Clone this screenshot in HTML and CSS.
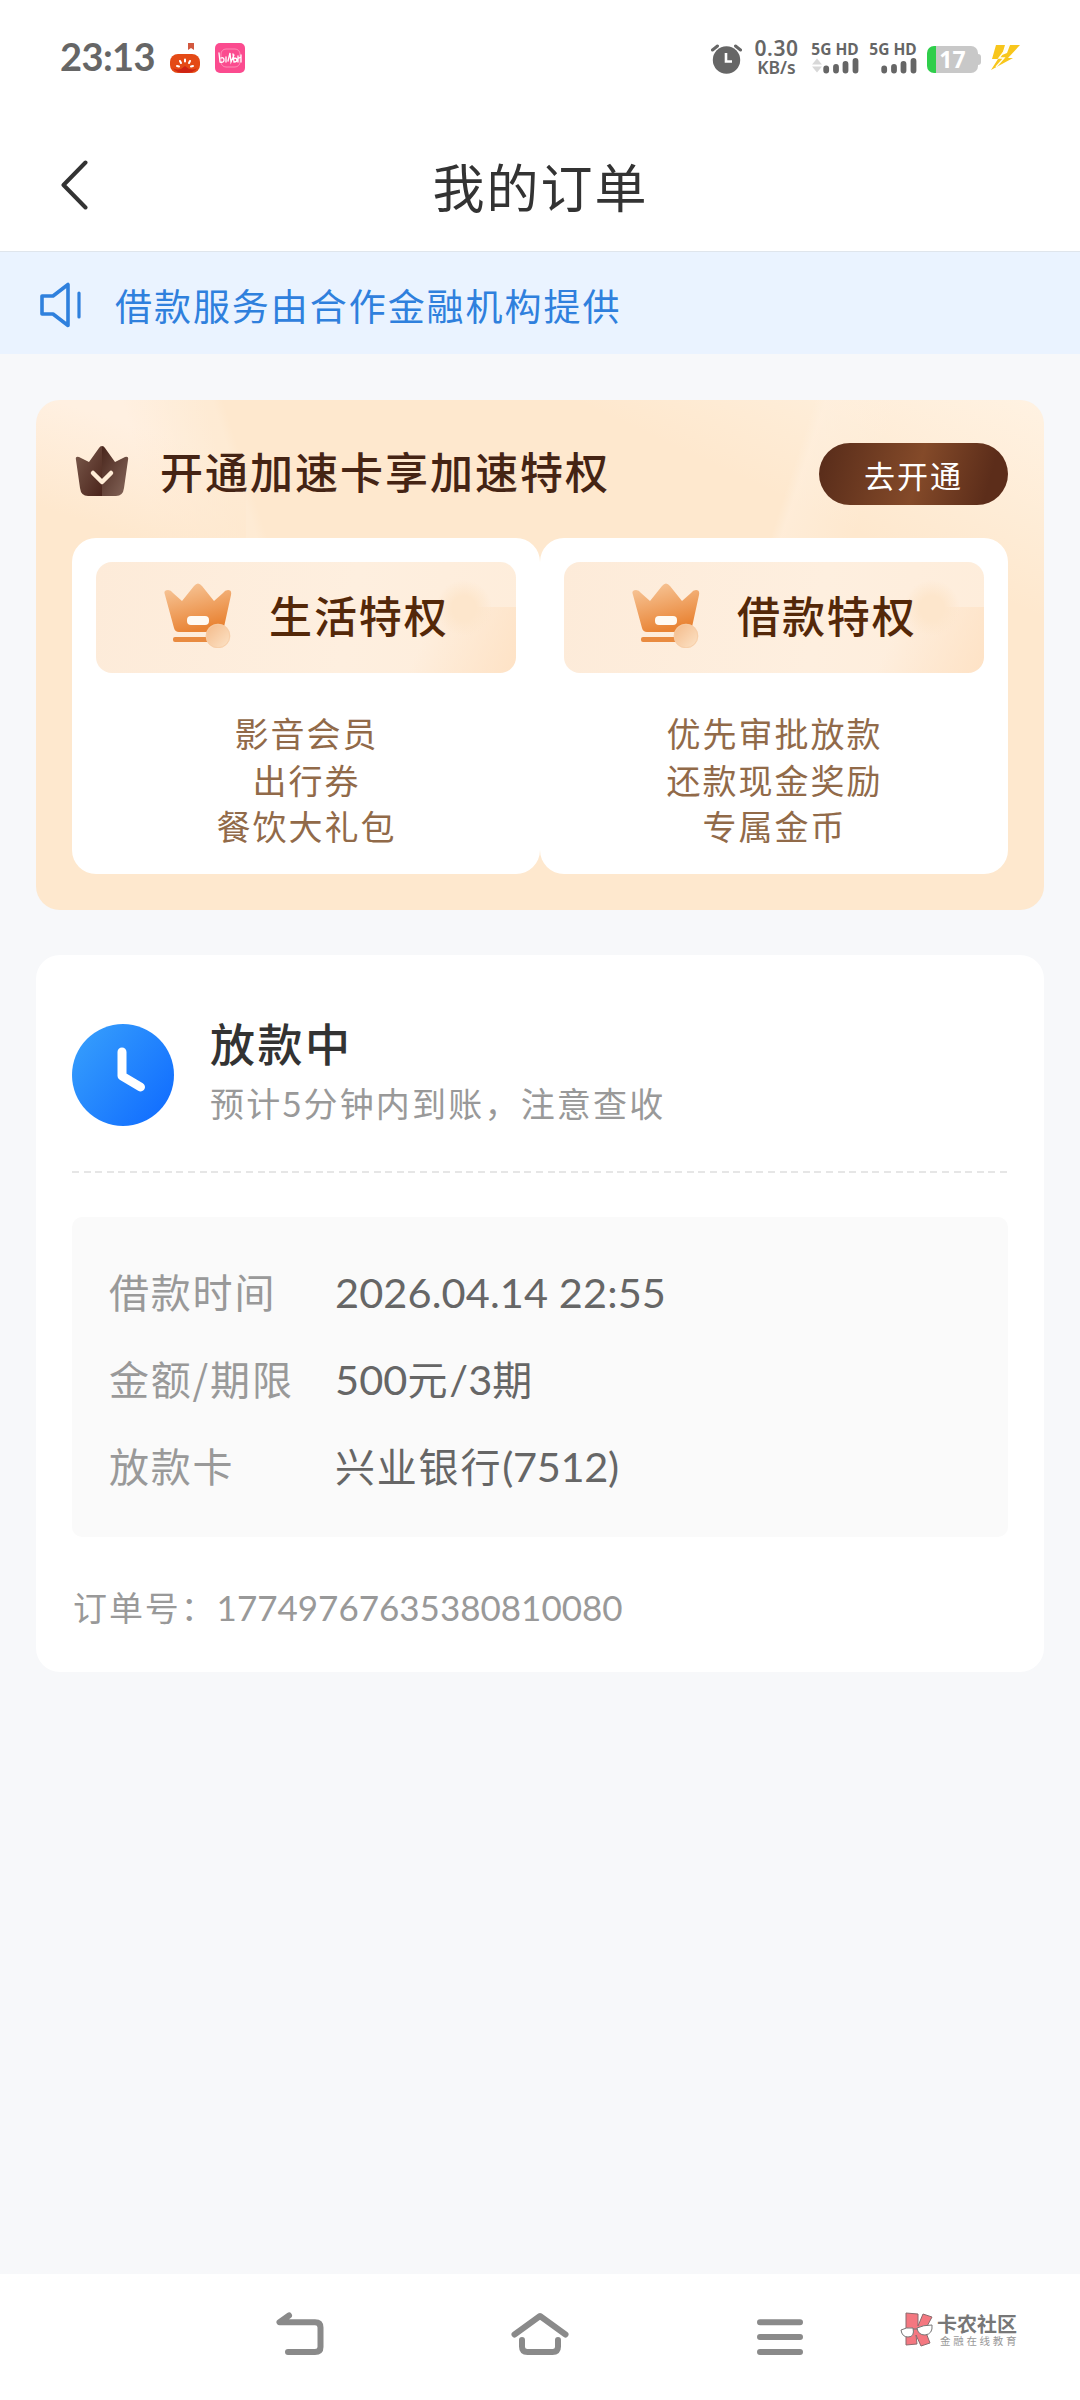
FILE: index.html
```html
<!DOCTYPE html>
<html lang="zh-CN">
<head>
<meta charset="utf-8">
<title>我的订单</title>
<link rel="stylesheet" href="styles.css">
</head>
<body>
<svg class="defs" width="0" height="0" aria-hidden="true">
  <defs>
    <linearGradient id="gold" x1="0" y1="0" x2=".35" y2="1"><stop offset="0" stop-color="#f8cba0"/><stop offset="1" stop-color="#e98435"/></linearGradient>
    <linearGradient id="coin" x1="0" y1="0" x2="1" y2="1"><stop offset="0" stop-color="#f3b988"/><stop offset="1" stop-color="#fde4c8"/></linearGradient>
    <symbol id="crown" viewBox="0 0 68 66">
      <path fill="url(#gold)" d="M1 13Q-1 8 4 8Q7 8 9 11L18 19L30 4Q34-1 38 4L50 19L59 11Q61 8 64 8Q68 8 67 13L60 45Q59 50 54 50H15Q11 50 10 46Z"/>
      <rect x="23" y="34" width="22" height="9" rx="4" fill="#fffaf3"/>
      <rect x="9" y="55" width="42" height="5" rx="2" fill="#e98b40"/>
      <circle cx="54" cy="54" r="12.3" fill="url(#coin)"/>
      <circle cx="54" cy="54" r="11.7" fill="none" stroke="#f6cba4" stroke-width=".8"/>
    </symbol>
  </defs>
</svg>

<div class="status">
  <span class="clock">23:13</span>
  <svg class="app-icon" viewBox="0 0 30 30">
    <path fill="#d2583f" d="M18 0h6v7l-3-2-3 2z"/>
    <rect y="11" width="30" height="19" rx="8" fill="#e44a16"/>
    <path d="M3 25q6 4 12-2q6 6 12 2q-3 5-12 5t-12-5" fill="#cf2413"/>
    <path d="M15 16.500v2M10 18l1 2M20 18l-1 2M7 23l2 .5M23 23l-2 .5" stroke="#fff" stroke-width="2" stroke-linecap="round"/>
  </svg>
  <svg class="app-icon second" viewBox="0 0 30 30">
    <rect width="30" height="30" rx="5" fill="#fb4b8f"/>
    <rect x="6" y="6" width="19" height="18" rx="5" fill="none" stroke="#fd8db6"/>
    <path d="M4 10l1 9q4 1 4-2t-3-2M11 14v5M13 18l2-8 1 9 3-7M18 11l1 8q3 0 3-2t-3-2M23 13v6M26 12v7M24 15l2-1" fill="none" stroke="#fff" stroke-width="1.300" stroke-linecap="round"/>
  </svg>
  <svg class="alarm" viewBox="0 0 31 30">
    <circle cx="15.500" cy="16" r="13.700" fill="#666"/>
    <path d="M1.500 6l5-4M29.500 6l-5-4" stroke="#666" stroke-width="3" stroke-linecap="round"/>
    <path d="M15 9v8.500h6" fill="none" stroke="#fff" stroke-width="2.600"/>
  </svg>
  <div class="speed"><span class="rate">0.30</span><span class="unit">KB/s</span></div>
  <div class="sim">
    <span>5G HD</span>
    <svg viewBox="0 0 48 17"><path fill="#d8d8d8" d="M1 7.500l5-6 5 6zM1 9.500l5 6 5-6z"/><path stroke="#666" stroke-width="5.800" stroke-linecap="round" d="M15.200 11.500v2M25 10v3.500M34.500 7v6.500M44.500 4v9.500"/></svg>
  </div>
  <div class="sim">
    <span>5G HD</span>
    <svg viewBox="0 0 48 17"><path stroke="#666" stroke-width="5.800" stroke-linecap="round" d="M15.200 11.500v2M25 10v3.500M34.500 7v6.500M44.500 4v9.500"/></svg>
  </div>
  <div class="battery"><span>17</span></div>
  <svg class="bolt" viewBox="0 0 30 26"><path fill="#f8c61c" d="M6 0h9l-3 10 5-2 3-8h10L18 13h5L1 25 8 14H2z"/><path d="M19 0L9 13h5L6 22" fill="none" stroke="#fffdf0" stroke-width="1.400"/></svg>
</div>

<header class="header">
  <svg class="back" viewBox="0 0 28 50"><path d="M25.500 2.500L3.500 25l22 22.500" fill="none" stroke="#333" stroke-width="4" stroke-linecap="round" stroke-linejoin="round"/></svg>
  <h1>我的订单</h1>
</header>

<div class="notice">
  <svg viewBox="0 0 42 46"><path d="M2 14h11L28 2.500v41L13 32H2z" fill="none" stroke="#2f80dd" stroke-width="3.600" stroke-linejoin="round"/><path d="M39 11v24" stroke="#2f80dd" stroke-width="3.200" stroke-linecap="round"/></svg>
  <span>借款服务由合作金融机构提供</span>
</div>

<main class="content">
  <section class="promo">
    <div class="promo-head">
      <svg viewBox="0 0 54 50">
        <defs>
          <linearGradient id="cl" x1="0" y1="0" x2="1" y2="1"><stop offset="0" stop-color="#7b5a4c"/><stop offset="1" stop-color="#4a241b"/></linearGradient>
          <linearGradient id="cr" x1="0" y1="0" x2="1" y2="1"><stop offset="0" stop-color="#49261c"/><stop offset="1" stop-color="#86675b"/></linearGradient>
        </defs>
        <path fill="url(#cl)" d="M27 0Q25 0 24 2L14 16L4 11Q0 10 1 14L5 42Q6 50 13 50H27Z"/>
        <path fill="url(#cr)" d="M27 0Q29 0 30 2L40 16L50 11Q54 10 53 14L49 42Q48 50 41 50H27Z"/>
        <path d="M18 27l9 9 9-9" fill="none" stroke="#ffedd7" stroke-width="4.500" stroke-linecap="round" stroke-linejoin="round"/>
      </svg>
      <h2>开通加速卡享加速特权</h2>
      <a class="open-btn">去开通</a>
    </div>
    <div class="perks">
      <div class="perk">
        <div class="perk-title"><svg><use href="#crown"/></svg><span>生活特权</span></div>
        <ul><li>影音会员</li><li>出行券</li><li>餐饮大礼包</li></ul>
      </div>
      <div class="perk">
        <div class="perk-title"><svg><use href="#crown"/></svg><span>借款特权</span></div>
        <ul><li>优先审批放款</li><li>还款现金奖励</li><li>专属金币</li></ul>
      </div>
    </div>
  </section>

  <section class="order">
    <div class="state">
      <svg viewBox="0 0 102 102">
        <defs><linearGradient id="blue" x1="0" y1=".1" x2="1" y2=".9"><stop offset="0" stop-color="#379ffc"/><stop offset="1" stop-color="#0f6bff"/></linearGradient></defs>
        <circle cx="51" cy="51" r="51" fill="url(#blue)"/>
        <path d="M50 28v24l18.500 11" fill="none" stroke="#fff" stroke-width="9" stroke-linecap="round" stroke-linejoin="round"/>
      </svg>
      <div class="state-text"><h3>放款中</h3><p>预计5分钟内到账，注意查收</p></div>
    </div>
    <div class="divider"></div>
    <dl class="info">
      <dt>借款时间</dt><dd><span class="num">2026.04.14 22:55</span></dd>
      <dt>金额/期限</dt><dd><span class="num">500</span>元<span class="num">/3</span>期</dd>
      <dt>放款卡</dt><dd>兴业银行<span class="num card">(7512)</span></dd>
    </dl>
    <p class="order-no">订单号：<span>17749767635380810080</span></p>
  </section>
</main>

<nav class="navbar">
  <svg class="nav-back" viewBox="0 0 48 44"><path d="M13 3.500L3.500 10.200H39Q44.500 10.200 44.500 15.500V35Q44.500 40 39 40H12" fill="none" stroke="#8a8a8a" stroke-width="6" stroke-linecap="round" stroke-linejoin="round"/></svg>
  <svg class="nav-home" viewBox="0 0 58 44"><path d="M3.500 22.500L29 4l25.500 18.500M11 28v6.500q0 5.500 5.500 5.500h25q5.500 0 5.500-5.500V28" fill="none" stroke="#8a8a8a" stroke-width="6" stroke-linecap="round" stroke-linejoin="round"/></svg>
  <svg class="nav-menu" viewBox="0 0 46 44"><path d="M3 10.200h40M3 25h40M3 40h40" stroke="#8a8a8a" stroke-width="6" stroke-linecap="round"/></svg>
  <div class="brand">
    <svg viewBox="0 0 34 36"><path d="M6 1l12 1v12l5-12 9 3-7 13 5 13-9 3-5-11 1 9-11 1z" fill="#f47780" stroke="#8b6b6e" stroke-width="1"/><path d="M1 18q5-3 12-2q2 9-5 9q-6 0-7-7zM17 16q6-3 15-3q1 9-7 10q-7 0-8-7zM13 17h4" fill="#fff" stroke="#777" stroke-width="1"/></svg>
    <div><b>卡农社区</b><small>金融在线教育</small></div>
  </div>
</nav>
</body>
</html>
```
FILE: styles.css
```css
* { box-sizing: border-box; margin: 0; padding: 0; }
body {
  width: 1080px;
  height: 2400px;
  display: flex;
  flex-direction: column;
  background: #f7f8fa;
  font-family: "Noto Sans CJK SC", sans-serif;
  color: #333;
  overflow: hidden;
}
svg { display: block; flex: none; }
.defs { position: absolute; }
ul { list-style: none; }

.status {
  height: 116px;
  padding: 0 60px;
  display: flex;
  align-items: center;
  background: #fff;
  color: #666;
}
.clock { width: 110px; padding-bottom: 4px; font: 700 38px/40px Lato, sans-serif; letter-spacing: -.6px; white-space: nowrap; }
.app-icon { width: 30px; height: 30px; }
.app-icon.second { margin-left: 15px; }
.alarm { width: 31px; height: 30px; margin: 2px 0 0 466px; }
.speed { width: 49px; margin: -2px 0 0 10px; display: flex; flex-direction: column; align-items: center; font-family: "Noto Sans", sans-serif; font-weight: 600; }
.rate { font-size: 21px; line-height: 19px; letter-spacing: .6px; }
.unit { font-size: 17.500px; line-height: 18px; }
.sim { width: 48px; margin: -2px 0 0 10px; }
.sim span { display: block; font: 700 15.500px/16px "Noto Sans", sans-serif; white-space: nowrap; text-align: center; }
.sim svg { width: 48px; height: 17px; }
.battery {
  position: relative;
  width: 51px;
  height: 27px;
  margin: 2px 0 0 10px;
  border-radius: 7px;
  background: linear-gradient(90deg, #2fce4b 9px, #c8c8c8 9px);
  color: #fff;
  font: 700 23px/27px "Noto Sans", sans-serif;
  text-align: center;
}
.battery::after { content: ""; position: absolute; left: 51px; top: 8px; width: 3px; height: 11px; border-radius: 0 3px 3px 0; background: #c8c8c8; }
.bolt { width: 30px; height: 26px; margin-left: 12px; }

.header {
  height: 136px;
  display: grid;
  grid-template-columns: 100px 1fr 100px;
  align-items: center;
  background: #fff;
  border-bottom: 1px solid #dfe5ec;
}
.back { width: 28px; height: 50px; margin: 3px 0 0 60px; }
.header h1 { font-size: 52px; line-height: 60px; font-weight: 400; letter-spacing: 2px; text-align: center; padding: 4px 0 0 1px; }

.notice {
  height: 102px;
  padding: 4px 0 0 40px;
  display: flex;
  align-items: center;
  gap: 33px;
  background: #eaf3ff;
  color: #2f80dd;
  font-size: 37px;
  letter-spacing: 1.950px;
}
.notice svg { width: 42px; height: 46px; }

.content { flex: 1; padding: 46px 36px 0; display: flex; flex-direction: column; gap: 45px; }

.promo {
  height: 510px;
  padding: 0 36px;
  border-radius: 24px;
  background:
    linear-gradient(18deg, #fee8ce 30%, #fee8ce00 75%) 0 0 / 210px 180px no-repeat,
    linear-gradient(75deg, #fff0e1 0 130px, #fff0e100 210px) 0 0 / 330px 180px no-repeat,
    linear-gradient(252deg, transparent 78%, #ffefdd66 79% 86%, transparent 88%) top / 100% 138px no-repeat,
    linear-gradient(108deg, transparent 74%, #fff0e088 75%, #fff0e000 82%) top / 100% 138px no-repeat,
    linear-gradient(205deg, #fff2e2, #fff2e200 200px),
    #fee8ce;
}
.promo-head { height: 138px; padding-top: 4px; display: flex; align-items: center; }
.promo-head svg { width: 54px; height: 50px; margin-left: 3px; }
.promo-head h2 { flex: 1; margin: -2px 0 0 31px; font-size: 43px; line-height: 60px; font-weight: 500; letter-spacing: 2px; color: #452414; }
.open-btn {
  width: 189px;
  height: 62px;
  margin-top: 6px;
  border-radius: 31px;
  background: linear-gradient(105deg, #5b2e1b 5%, #844a29 52%, #5c2d1a 88%);
  color: #fff;
  font-size: 31px;
  line-height: 63px;
  letter-spacing: 2px;
  text-align: center;
}
.perks { display: grid; grid-template-columns: 1fr 1fr; }
.perk { height: 336px; padding: 24px; border-radius: 24px; background: #fff; }
.perk-title {
  height: 111px;
  padding: 0 0 5px 68px;
  display: flex;
  align-items: center;
  border-radius: 16px;
  background:
    radial-gradient(circle at 368px 46px, #fde6cc 0 12px, #fde6cc00 28px),
    linear-gradient(115deg, #fee3c700 310px, #fee1c3 420px) 0 45px no-repeat,
    linear-gradient(100deg, #fdebd9, #feefdf 60%, #feeddb);
}
.perk-title svg { width: 68px; height: 66px; }
.perk-title span { margin-left: 37px; font-size: 43px; line-height: 60px; font-weight: 500; letter-spacing: 1.900px; color: #542809; padding-bottom: 2px; }
.perk ul { padding: 37px 0 0 1px; font-size: 34px; line-height: 46.700px; letter-spacing: 2px; text-align: center; color: #916a49; }

.order { height: 717px; padding: 0 36px; border-radius: 24px; background: #fff; }
.state { height: 216px; padding-top: 8px; display: flex; align-items: center; gap: 36px; }
.state > svg { width: 102px; height: 102px; margin-top: 16px; }
.state-text { padding-top: 9px; }
.state h3 { font-size: 45px; line-height: 62px; font-weight: 500; letter-spacing: 2.500px; }
.state p { font-size: 34px; line-height: 58px; letter-spacing: 2.200px; color: #999; }
.divider { height: 2px; background: repeating-linear-gradient(90deg, #e6e6e6 0 7px, transparent 7px 11.600px); }
.info {
  height: 320px;
  margin-top: 44px;
  padding: 31px 37px 0;
  display: grid;
  grid-template-columns: 226px 1fr;
  grid-auto-rows: 87px;
  line-height: 87px;
  border-radius: 10px;
  background: #fafafa;
  font-size: 40px;
  letter-spacing: 1.800px;
}
.info dt { color: #999; }
.info dd { color: #666; }
.num { font: 400 41.500px/60px Lato, sans-serif; letter-spacing: .1px; }
.num.card { letter-spacing: -.3px; }
.order-no { margin-top: 40px; padding-left: 1px; font-size: 34px; line-height: 60px; letter-spacing: 1.900px; color: #999; }
.order-no span { font-family: Lato, sans-serif; font-size: 35px; letter-spacing: 0; }

.navbar { height: 126px; padding-left: 276px; display: flex; background: #fff; }
.navbar > * { margin-top: 38px; }
.nav-back { width: 48px; height: 44px; }
.nav-home { width: 58px; height: 44px; margin-left: 187px; }
.nav-menu { width: 46px; height: 44px; margin-left: 188px; }
.brand { margin-left: 97px; display: flex; gap: 3px; color: #777; }
.brand svg { width: 34px; height: 36px; }
.brand b { display: block; font-size: 20px; line-height: 23px; font-weight: 700; white-space: nowrap; }
.brand small { display: block; margin-left: 3px; font-size: 10.500px; line-height: 12px; letter-spacing: 2.700px; color: #999; white-space: nowrap; }
```
